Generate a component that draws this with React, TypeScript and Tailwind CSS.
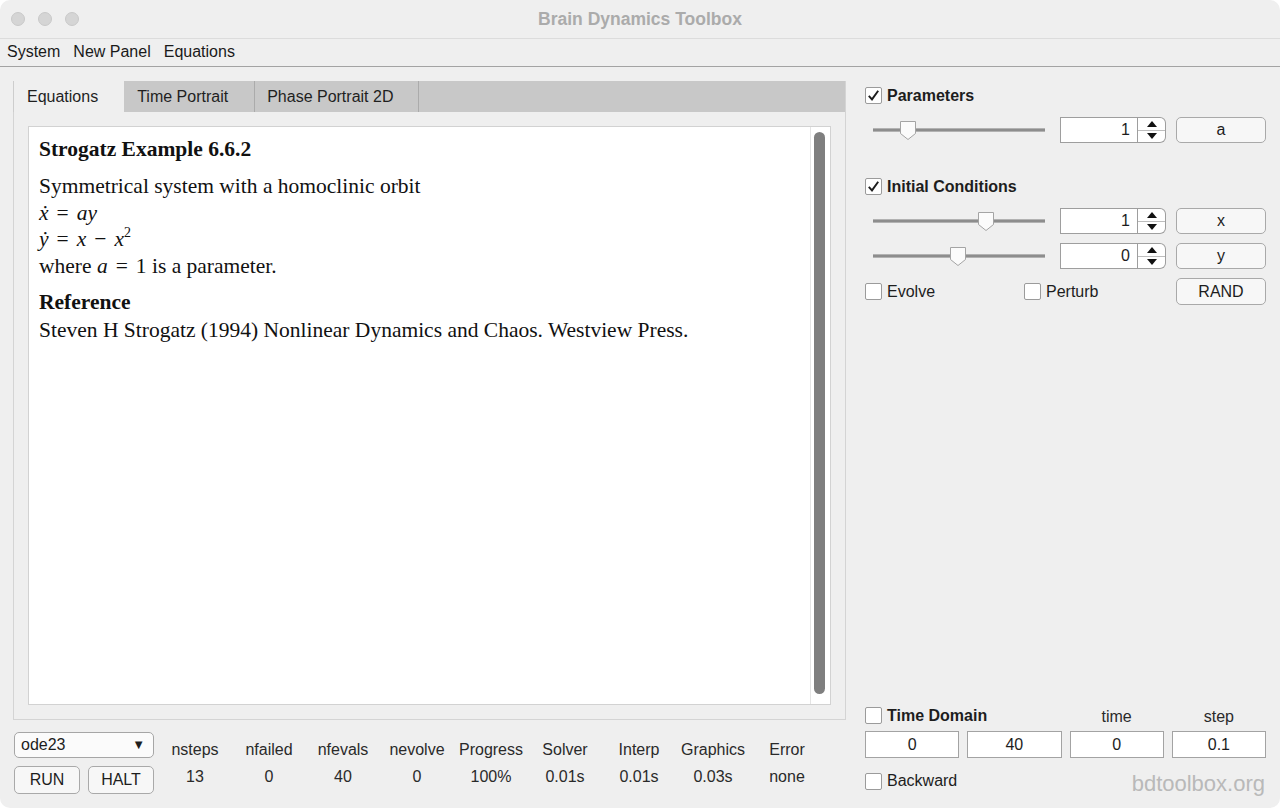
import React from 'react'

const stats = [
  { label: 'nsteps', value: '13' },
  { label: 'nfailed', value: '0' },
  { label: 'nfevals', value: '40' },
  { label: 'nevolve', value: '0' },
  { label: 'Progress', value: '100%' },
  { label: 'Solver', value: '0.01s' },
  { label: 'Interp', value: '0.01s' },
  { label: 'Graphics', value: '0.03s' },
  { label: 'Error', value: 'none' },
]

function Checkbox({ checked = false }: { checked?: boolean }) {
  return (
    <span className="w-[17px] h-[17px] shrink-0 bg-white border border-[#9b9b9b] rounded-[2px] flex items-center justify-center">
      {checked && (
        <svg width="13" height="13" viewBox="0 0 13 13">
          <path d="M1.8 6.8 L5 10.4 L11.2 1.8" fill="none" stroke="#1d1d1d" strokeWidth="1.9" />
        </svg>
      )}
    </span>
  )
}

function Slider({ offset }: { offset: number }) {
  return (
    <div className="relative w-[172px] h-[26px] flex items-center">
      <div className="w-full h-[4px] bg-[#8d8d8d] border-y border-[#b2b2b2]" />
      <svg className="absolute top-[4px]" style={{ left: offset }} width="16" height="19" viewBox="0 0 16 19">
        <path d="M0.5 0.5 H15.5 V12.5 L8 18.5 L0.5 12.5 Z" fill="#fbfbfb" stroke="#a4a4a4" />
      </svg>
    </div>
  )
}

function Spinbox({ value }: { value: string }) {
  return (
    <div className="flex h-[26px] w-[106px]">
      <div className="w-[78px] h-full bg-white border border-[#9e9e9e] text-right pr-[7px] leading-[24px] text-[16px]">
        {value}
      </div>
      <div className="w-[28px] h-full bg-white border border-l-0 border-[#9e9e9e] rounded-r-[6px] flex flex-col">
        <div className="flex-1 flex items-center justify-center border-b border-[#bdbdbd]">
          <svg width="10" height="6" viewBox="0 0 10 6"><path d="M0 6 L5 0 L10 6 Z" fill="#111" /></svg>
        </div>
        <div className="flex-1 flex items-center justify-center">
          <svg width="10" height="6" viewBox="0 0 10 6"><path d="M0 0 L10 0 L5 6 Z" fill="#111" /></svg>
        </div>
      </div>
    </div>
  )
}

function Btn({ label, className = '' }: { label: string; className?: string }) {
  return (
    <div className={`rounded-[5px] border border-[#a9a9a9] bg-[#f7f7f7] flex items-center justify-center text-[16px] text-[#1d1d1d] ${className}`}>
      {label}
    </div>
  )
}

function VarRow({ offset, value, name }: { offset: number; value: string; name: string }) {
  return (
    <div className="flex items-center h-[26px]">
      <div className="w-[180px] pl-[8px]">
        <Slider offset={offset} />
      </div>
      <div className="ml-[15px]">
        <Spinbox value={value} />
      </div>
      <Btn label={name} className="ml-[10px] w-[90px] h-[26px]" />
    </div>
  )
}

export default function App() {
  return (
    <div className="w-[1280px] h-[808px] bg-[#efefef] rounded-[10px] overflow-hidden flex flex-col font-['Liberation_Sans',Arial,sans-serif] text-[#1d1d1d]">
      {/* Title bar */}
      <div className="h-[39px] shrink-0 border-b border-[#dcdcdc] grid grid-cols-[1fr_auto_1fr] items-center">
        <div className="flex items-center gap-[13px] pl-[11px]">
          <span className="w-[14px] h-[14px] rounded-full bg-[#d5d5d5] border border-[#c9c9c9]" />
          <span className="w-[14px] h-[14px] rounded-full bg-[#d5d5d5] border border-[#c9c9c9]" />
          <span className="w-[14px] h-[14px] rounded-full bg-[#d5d5d5] border border-[#c9c9c9]" />
        </div>
        <div className="text-[17.5px] font-bold text-[#ababab]">Brain Dynamics Toolbox</div>
        <div />
      </div>

      {/* Menu bar */}
      <div className="h-[28px] shrink-0 border-b border-[#a3a3a3] flex items-center gap-[13px] pl-[7px] pb-[2px] text-[16px] text-[#1a1a1a]">
        <span>System</span>
        <span>New Panel</span>
        <span>Equations</span>
      </div>

      <div className="flex flex-1 min-h-0">
        {/* Left column */}
        <div className="w-[846px] shrink-0 pl-[13px] pt-[14px] flex flex-col">
          {/* Tabs */}
          <div className="h-[31px] w-[833px] bg-[#c8c8c8] flex text-[16px] text-[#1f1f1f] border-r border-[#d4d4d4]">
            <div className="h-full pl-[13px] pr-[26px] flex items-center bg-[#efefef] border-l border-[#cdcdcd]">Equations</div>
            <div className="h-full pl-[13px] pr-[26px] flex items-center border-r border-[#ababab]">Time Portrait</div>
            <div className="h-full pl-[12px] pr-[25px] flex items-center border-r border-[#ababab]">Phase Portrait 2D</div>
          </div>

          {/* Panel */}
          <div className="h-[608px] w-[833px] border-x border-b border-[#d4d4d4] bg-[#efefef] px-[14px] py-[14px] flex">
            <div className="flex-1 bg-white border border-[#d2d2d2] flex">
              <div className="flex-1 pl-[10px] pt-[8px] font-['Liberation_Serif','Times_New_Roman',serif] text-[21.5px] text-[#111]">
                <div className="font-bold leading-[28px]">Strogatz Example 6.6.2</div>
                <div className="mt-[10px] leading-[26.5px]">
                  <div>Symmetrical system with a homoclinic orbit</div>
                  <div>
                    <i>ẋ</i>
                    <span className="mx-[8px]">=</span>
                    <i>ay</i>
                  </div>
                  <div>
                    <i>ẏ</i>
                    <span className="mx-[8px]">=</span>
                    <i>x</i>
                    <span className="mx-[8px]">−</span>
                    <i>x</i>
                    <sup className="text-[14px] top-[-9px]">2</sup>
                  </div>
                  <div>
                    where <i>a</i>
                    <span className="mx-[8px]">=</span>1 is a parameter.
                  </div>
                </div>
                <div className="mt-[9px] leading-[28px]">
                  <div className="font-bold">Reference</div>
                  <div>Steven H Strogatz (1994) Nonlinear Dynamics and Chaos. Westview Press.</div>
                </div>
              </div>
              <div className="w-[20px] border-l border-[#e4e4e4] pl-[3px] pt-[5px] pb-[10px] flex">
                <div className="w-[11px] rounded-full bg-[#7f7f7f]" />
              </div>
            </div>
          </div>

          {/* Solver controls */}
          <div className="flex mt-[12px]">
            <div className="w-[145px] pl-[1px] flex flex-col">
              <div className="h-[26px] w-[140px] rounded-[5px] border border-[#a6a6a6] bg-[#fbfbfb] flex items-center justify-between pl-[6px] pr-[8px] text-[16px]">
                <span>ode23</span>
                <span className="text-[13px]">▼</span>
              </div>
              <div className="flex gap-[8px] mt-[8px]">
                <Btn label="RUN" className="w-[66px] h-[28px]" />
                <Btn label="HALT" className="w-[66px] h-[28px]" />
              </div>
            </div>
            <div className="grid grid-cols-[repeat(9,74px)] text-[16px] text-[#2a2a2a] text-center mt-[8px]">
              {stats.map((s) => (
                <div key={s.label} className="flex flex-col">
                  <span className="leading-[20px]">{s.label}</span>
                  <span className="leading-[20px] mt-[7px]">{s.value}</span>
                </div>
              ))}
            </div>
          </div>
        </div>

        {/* Right column */}
        <div className="flex-1 pl-[19px] pr-[14px] flex flex-col text-[16px]">
          <div className="flex items-center gap-[5px] mt-[20px] h-[17px]">
            <Checkbox checked />
            <span className="font-bold">Parameters</span>
          </div>
          <div className="mt-[13px]">
            <VarRow offset={27} value="1" name="a" />
          </div>

          <div className="flex items-center gap-[5px] mt-[35px] h-[17px]">
            <Checkbox checked />
            <span className="font-bold">Initial Conditions</span>
          </div>
          <div className="mt-[13px]">
            <VarRow offset={105} value="1" name="x" />
          </div>
          <div className="mt-[9px]">
            <VarRow offset={77} value="0" name="y" />
          </div>
          <div className="mt-[9px] h-[27px] flex items-center">
            <div className="w-[159px] flex items-center gap-[5px]">
              <Checkbox />
              <span>Evolve</span>
            </div>
            <div className="flex-1 flex items-center gap-[5px]">
              <Checkbox />
              <span>Perturb</span>
            </div>
            <Btn label="RAND" className="w-[90px] h-[27px]" />
          </div>

          {/* Time domain */}
          <div className="mt-auto pb-[14px]">
            <div className="grid grid-cols-4 gap-x-[8px] h-[20px] items-center">
              <div className="col-span-2 flex items-center gap-[5px]">
                <Checkbox />
                <span className="font-bold">Time Domain</span>
              </div>
              <div className="text-center mt-[3px] text-[#2a2a2a]">time</div>
              <div className="text-center mt-[3px] text-[#2a2a2a]">step</div>
            </div>
            <div className="grid grid-cols-4 gap-x-[8px] mt-[9px]">
              {['0', '40', '0', '0.1'].map((v, i) => (
                <div key={i} className="h-[27px] bg-white border border-[#a3a3a3] flex items-center justify-center">
                  {v}
                </div>
              ))}
            </div>
            <div className="mt-[10px] h-[26px] flex items-center justify-between">
              <div className="flex items-center gap-[5px]">
                <Checkbox />
                <span>Backward</span>
              </div>
              <span className="text-[22px] text-[#b9b9b9] mt-[5px] mr-[1px]">bdtoolbox.org</span>
            </div>
          </div>
        </div>
      </div>
    </div>
  )
}
